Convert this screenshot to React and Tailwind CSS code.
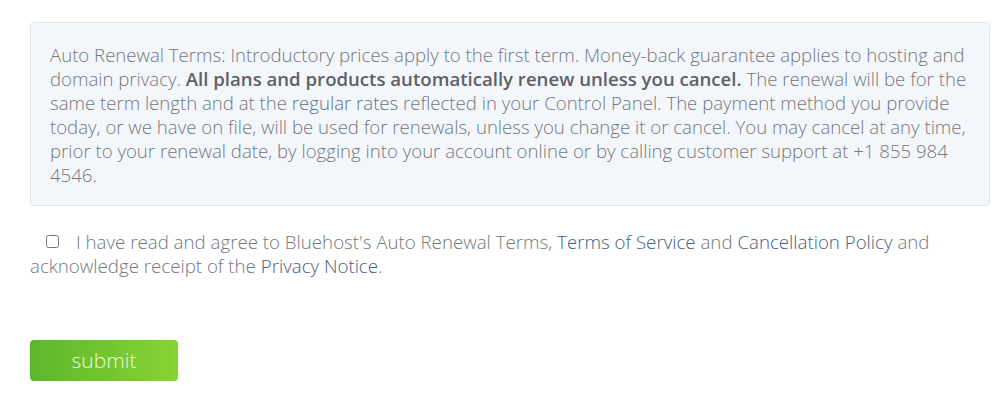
export default function App() {
  return (
    <div className="bg-white w-[1000px] h-[400px] pt-[22px] px-[30px] font-['Open_Sans',sans-serif] font-light text-[#74787d]">
      <div className="w-[960px] rounded border border-[#dfe5ec] bg-[#f3f7fc] pl-[19px] pr-[16px] pt-[20px] pb-[18px] text-[18.6px] leading-[24px]">
        Auto Renewal Terms: Introductory prices apply to the first term. Money-back guarantee applies to hosting and
        domain privacy. <span className="font-semibold text-[#5d6166]">All plans and products automatically renew unless you cancel.</span> The
        renewal will be for the same term length and at the <span className="text-[#5d7389]">regular rates</span> reflected in your
        Control Panel. The payment method you provide today, or we have on file, will be used for renewals, unless you
        change it or cancel. You may cancel at any time, prior to your renewal date, by logging into your account online
        or by calling customer support at +1 855 984 4546.
      </div>

      <p className="mt-[24px] text-[18.7px] leading-[24px]">
        <input type="checkbox" className="ml-[16px] mr-[17px] w-[13px] h-[13px] align-[1px]" />
        I have read and agree to Bluehost's Auto Renewal Terms,{' '}
        <a className="text-[#44607f]">Terms of Service</a> and{' '}
        <a className="text-[#44607f]">Cancellation Policy</a> and acknowledge receipt of the{' '}
        <a className="text-[#44607f]">Privacy Notice</a>.
      </p>

      <button className="mt-[62px] w-[148px] h-[41px] rounded bg-gradient-to-r from-[#5bb72b] to-[#88d335] text-[21px] font-light text-[#eef9df]">
        submit
      </button>
    </div>
  );
}
